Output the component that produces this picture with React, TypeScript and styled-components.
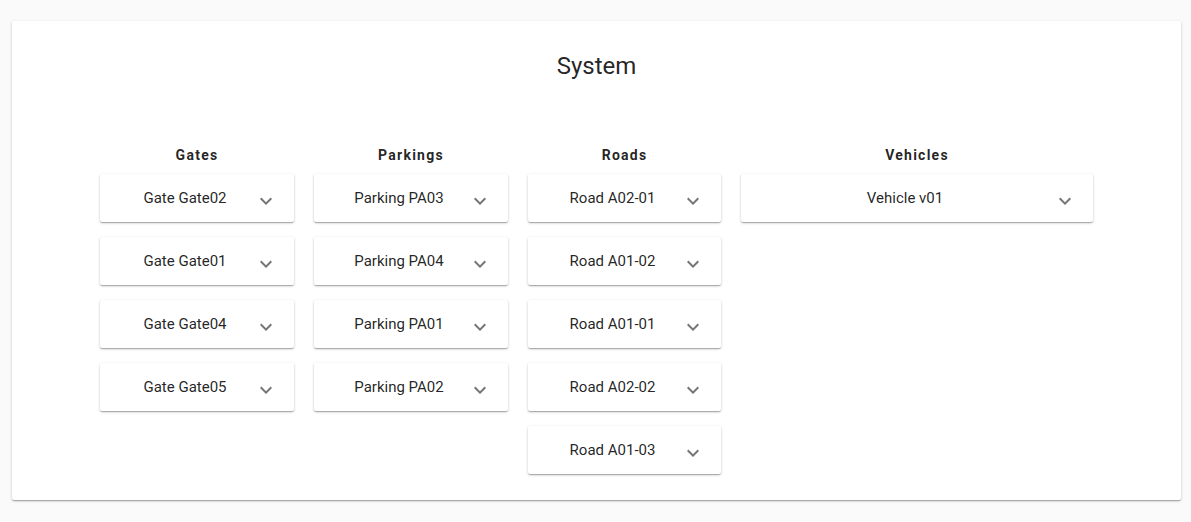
import React from 'react';
import styled, { createGlobalStyle } from 'styled-components';

const GlobalStyle = createGlobalStyle`
  html, body {
    margin: 0;
    padding: 0;
    background: #fafafa;
    font-family: Roboto, 'Liberation Sans', sans-serif;
    color: rgba(0, 0, 0, 0.87);
  }
`;

const columns = [
  { title: 'Gates', width: 194, items: ['Gate Gate02', 'Gate Gate01', 'Gate Gate04', 'Gate Gate05'] },
  { title: 'Parkings', width: 194, items: ['Parking PA03', 'Parking PA04', 'Parking PA01', 'Parking PA02'] },
  { title: 'Roads', width: 193, items: ['Road A02-01', 'Road A01-02', 'Road A01-01', 'Road A02-02', 'Road A01-03'] },
  { title: 'Vehicles', width: 352, items: ['Vehicle v01'] },
];

const ExpandIcon = () => (
  <svg width='24' height='24' viewBox='0 0 24 24' fill='rgba(0,0,0,0.54)'>
    <path d='M16.59 8.59L12 13.17 7.41 8.59 6 10l6 6 6-6z' />
  </svg>
);

const App: React.FC = () => {
  return (
    <Page>
      <GlobalStyle />
      <Paper>
        <Title>System</Title>
        <Columns>
          {columns.map((col) => (
            <Column key={col.title} $width={col.width}>
              <ColumnTitle>{col.title}</ColumnTitle>
              {col.items.map((item) => (
                <Panel key={item}>
                  <PanelLabel>{item}</PanelLabel>
                  <IconButton>
                    <ExpandIcon />
                  </IconButton>
                </Panel>
              ))}
            </Column>
          ))}
        </Columns>
      </Paper>
    </Page>
  );
};

const Page = styled.div`
  padding: 21px 10px 22px 12px;
  box-sizing: border-box;
  height: 522px;
`;

const Paper = styled.div`
  background: #fff;
  height: 479px;
  box-sizing: border-box;
  padding-top: 29px;
  border-radius: 2px;
  box-shadow: 0px 1px 3px 0px rgba(0, 0, 0, 0.2), 0px 1px 1px 0px rgba(0, 0, 0, 0.14),
    0px 2px 1px -1px rgba(0, 0, 0, 0.12);
`;

const Title = styled.h1`
  margin: 0;
  font-size: 24px;
  font-weight: 400;
  line-height: 32px;
  text-align: center;
`;

const Columns = styled.div`
  display: flex;
  justify-content: center;
  align-items: flex-start;
  gap: 20px;
  margin-top: 63px;
`;

const Column = styled.div<{ $width: number }>`
  width: ${(p) => p.$width}px;
  display: flex;
  flex-direction: column;
  gap: 15px;
`;

const ColumnTitle = styled.div`
  font-size: 14px;
  font-weight: 700;
  letter-spacing: 1.25px;
  line-height: 20px;
  text-align: center;
  margin-bottom: -6px;
`;

const Panel = styled.div`
  height: 48px;
  display: flex;
  align-items: center;
  padding: 0 16px 0 28px;
  background: #fff;
  border-radius: 2px;
  box-shadow: 0px 1px 3px 0px rgba(0, 0, 0, 0.2), 0px 1px 1px 0px rgba(0, 0, 0, 0.14),
    0px 2px 1px -1px rgba(0, 0, 0, 0.12);
`;

const PanelLabel = styled.div`
  flex: 1;
  text-align: center;
  font-size: 15px;
  line-height: 20px;
`;

const IconButton = styled.div`
  width: 48px;
  height: 48px;
  margin-right: -12px;
  display: flex;
  align-items: center;
  justify-content: center;
  padding-top: 6px;
  box-sizing: border-box;
`;

export default App;
